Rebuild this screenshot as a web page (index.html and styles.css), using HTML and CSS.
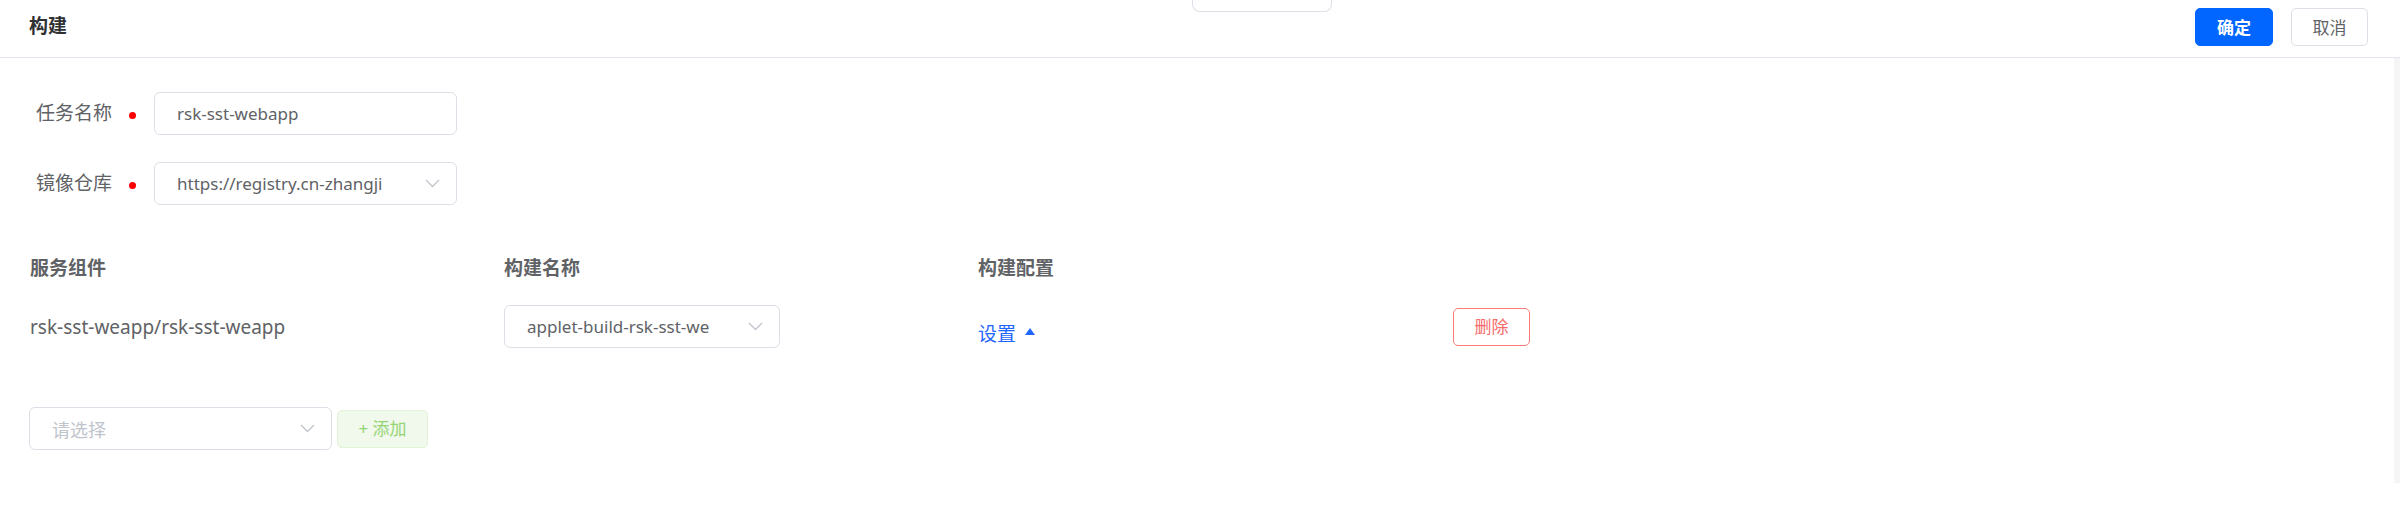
FILE: index.html
```html
<!DOCTYPE html>
<html lang="zh-CN">
<head>
    <meta charset="UTF-8">
    <meta name="viewport" content="width=device-width, initial-scale=1.0">
    <title>构建</title>
    <link rel="stylesheet" href="styles.css">
</head>
<body>
    <div class="header">
        <div class="title">构建</div>
        <div class="tab-stub"></div>
        <div class="actions">
            <button class="btn btn-primary">确定</button>
            <button class="btn btn-default">取消</button>
        </div>
    </div>

    <div class="body">
        <div class="content">
            <!-- 基本信息 -->
            <div class="form-row">
                <label class="form-label">任务名称</label>
                <span class="required-dot"></span>
                <div class="field">
                    <span class="field-value">rsk-sst-webapp</span>
                </div>
            </div>
            <div class="form-row">
                <label class="form-label">镜像仓库</label>
                <span class="required-dot"></span>
                <div class="field select">
                    <span class="field-value">https://registry.cn-zhangji</span>
                    <svg class="chevron" width="15" height="9" viewBox="0 0 15 9"><path d="M1 1 L7.5 7.5 L14 1" fill="none" stroke="#c0c4cc" stroke-width="1.3"/></svg>
                </div>
            </div>

            <!-- 服务组件列表 -->
            <div class="table">
                <div class="th">服务组件</div>
                <div class="th">构建名称</div>
                <div class="th">构建配置</div>
                <div class="th"></div>

                <div class="td">rsk-sst-weapp/rsk-sst-weapp</div>
                <div class="td">
                    <div class="field select build-select">
                        <span class="field-value">applet-build-rsk-sst-we</span>
                        <svg class="chevron" width="15" height="9" viewBox="0 0 15 9"><path d="M1 1 L7.5 7.5 L14 1" fill="none" stroke="#c0c4cc" stroke-width="1.3"/></svg>
                    </div>
                </div>
                <div class="td">
                    <a class="link">设置 <span class="caret-up"></span></a>
                </div>
                <div class="td">
                    <button class="btn btn-danger">删除</button>
                </div>
            </div>

            <div class="add-row">
                <div class="field select add-select">
                    <span class="field-value placeholder">请选择</span>
                    <svg class="chevron" width="15" height="9" viewBox="0 0 15 9"><path d="M1 1 L7.5 7.5 L14 1" fill="none" stroke="#c0c4cc" stroke-width="1.3"/></svg>
                </div>
                <button class="btn btn-success">+ 添加</button>
            </div>
        </div>
        <div class="scroll-track"></div>
    </div>
</body>
</html>
```

FILE: styles.css
```css
body {
    margin: 0;
    width: 2400px;
    height: 514px;
    overflow: hidden;
    background: #fff;
    font-family: "Noto Sans", "Noto Sans CJK SC", sans-serif;
    color: #606266;
}
.header {
    height: 57px;
    border-bottom: 1px solid #e4e7ed;
    display: flex;
    align-items: center;
    padding: 0 32px 0 29px;
}
.title {
    flex: 0 0 1163px;
    font-size: 19px;
    font-weight: bold;
    color: #303133;
    line-height: 1;
    margin-top: -4px;
}
.tab-stub {
    align-self: flex-start;
    width: 138px;
    height: 11px;
    border: 1px solid #dcdfe6;
    border-top: none;
    border-radius: 0 0 8px 8px;
}
.actions {
    margin-left: auto;
    display: flex;
    gap: 18px;
    margin-top: -3px;
}
.btn {
    height: 38px;
    padding: 0;
    border-radius: 5px;
    font-family: inherit;
    font-size: 17px;
    line-height: 1;
    cursor: pointer;
    box-sizing: border-box;
}
.btn-primary {
    width: 78px;
    background: #0066ff;
    border: 1px solid #0066ff;
    color: #fff;
    font-weight: bold;
}
.btn-default {
    width: 77px;
    background: #fff;
    border: 1px solid #dcdfe6;
    color: #606266;
}
.btn-danger {
    width: 77px;
    background: #fff;
    border: 1.5px solid #ff7b7b;
    color: #f56c6c;
}
.btn-success {
    width: 91px;
    background: #f0f9eb;
    border: 1px solid #e1f3d8;
    color: #95d475;
}
.body {
    display: flex;
}
.content {
    flex: 1;
    padding-top: 34px;
}
.scroll-track {
    width: 6px;
    height: 425px;
    background: #f5f5f5;
}
.form-row {
    display: flex;
    align-items: center;
    height: 43px;
    margin-bottom: 27px;
    padding-left: 36px;
}
.form-label {
    width: 76px;
    font-size: 19px;
    line-height: 1;
    color: #606266;
    margin-right: 17px;
}
.required-dot {
    width: 7px;
    height: 7px;
    border-radius: 50%;
    background: #f00;
    margin-right: 18px;
    margin-top: 4px;
}
.field {
    width: 303px;
    height: 43px;
    box-sizing: border-box;
    border: 1px solid #dcdfe6;
    border-radius: 6px;
    display: flex;
    align-items: center;
    padding: 0 16px 0 22px;
    font-size: 17px;
    color: #606266;
}
.field-value {
    flex: 1;
    white-space: nowrap;
}
.placeholder {
    color: #c0c4cc;
    font-size: 18px;
}
.chevron {
    flex: none;
    margin-left: 38px;
}
.table {
    display: grid;
    grid-template-columns: 474px 474px 475px auto;
    grid-template-rows: 27px 43px;
    row-gap: 23px;
    padding-left: 30px;
    margin-top: 50px;
}
.th {
    font-size: 19px;
    font-weight: bold;
    line-height: 27px;
    color: #606266;
}
.td {
    display: flex;
    align-items: center;
    font-size: 19px;
}
.build-select {
    width: 276px;
}
.link {
    color: #1f66ff;
    font-size: 19px;
    display: flex;
    align-items: center;
    margin-top: 12px;
    cursor: pointer;
}
.caret-up {
    display: inline-block;
    width: 0;
    height: 0;
    border-left: 5.5px solid transparent;
    border-right: 5.5px solid transparent;
    border-bottom: 7px solid #1f66ff;
    margin-left: 9px;
    margin-top: -3px;
}
.add-row {
    display: flex;
    align-items: center;
    gap: 5px;
    padding-left: 29px;
    margin-top: 59px;
}
.add-select {
    width: 303px;
}
```
